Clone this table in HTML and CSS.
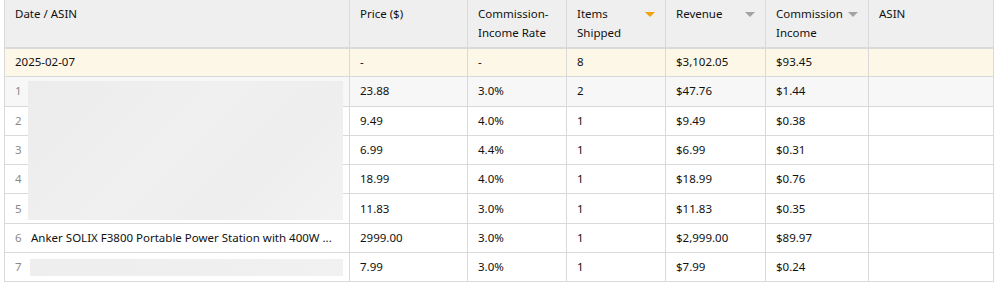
FILE: index.html
```html
<!DOCTYPE html>
<html>
<head>
<meta charset="utf-8">
<link rel="stylesheet" href="styles.css">
</head>
<body>
<table class="report">
  <colgroup>
    <col class="c-title"><col class="c-price"><col class="c-rate"><col class="c-items"><col class="c-rev"><col class="c-comm"><col class="c-asin">
  </colgroup>
  <thead>
    <tr>
      <th>Date / ASIN</th>
      <th>Price ($)</th>
      <th>Commission-<br>Income Rate</th>
      <th class="sortable"><span class="lbl">Items<br>Shipped</span><span class="arrow active"></span></th>
      <th class="sortable"><span class="lbl">Revenue</span><span class="arrow"></span></th>
      <th class="sortable"><span class="lbl">Commission<br>Income</span><span class="arrow"></span></th>
      <th>ASIN</th>
    </tr>
  </thead>
  <tbody>
    <tr class="date-row">
      <td>2025-02-07</td><td>-</td><td>-</td><td>8</td><td>$3,102.05</td><td>$93.45</td><td></td>
    </tr>
    <tr class="hover">
      <td class="title"><span class="num">1</span></td><td>23.88</td><td>3.0%</td><td>2</td><td>$47.76</td><td>$1.44</td><td></td>
    </tr>
    <tr>
      <td class="title"><span class="num">2</span></td><td>9.49</td><td>4.0%</td><td>1</td><td>$9.49</td><td>$0.38</td><td></td>
    </tr>
    <tr>
      <td class="title"><span class="num">3</span></td><td>6.99</td><td>4.4%</td><td>1</td><td>$6.99</td><td>$0.31</td><td></td>
    </tr>
    <tr>
      <td class="title"><span class="num">4</span></td><td>18.99</td><td>4.0%</td><td>1</td><td>$18.99</td><td>$0.76</td><td></td>
    </tr>
    <tr>
      <td class="title"><span class="num">5</span></td><td>11.83</td><td>3.0%</td><td>1</td><td>$11.83</td><td>$0.35</td><td></td>
    </tr>
    <tr>
      <td class="title"><span class="num">6</span><span class="name">Anker SOLIX F3800 Portable Power Station with 400W ...</span></td><td>2999.00</td><td>3.0%</td><td>1</td><td>$2,999.00</td><td>$89.97</td><td></td>
    </tr>
    <tr>
      <td class="title"><span class="num">7</span><span class="blur small"></span></td><td>7.99</td><td>3.0%</td><td>1</td><td>$7.99</td><td>$0.24</td><td></td>
    </tr>
  </tbody>
</table>
<div class="blur big"></div>
</body>
</html>
```

FILE: styles.css
```css
html, body {
  margin: 0;
  padding: 0;
  background: #ffffff;
}
body {
  padding: 0 0 0 4px;
  position: relative;
  font-family: "Noto Sans", "Open Sans", sans-serif;
  font-size: 11.5px;
  color: #111111;
}
.report {
  border-collapse: collapse;
  table-layout: fixed;
  width: 989px;
  margin-top: -1px;
}
.c-title { width: 345px; }
.c-price { width: 118px; }
.c-rate { width: 99px; }
.c-items { width: 99px; }
.c-rev { width: 100px; }
.c-comm { width: 103px; }
.c-asin { width: 125px; }

.report th, .report td {
  border: 1px solid #d9d9d9;
  text-align: left;
  padding: 0 10px;
  white-space: nowrap;
  overflow: hidden;
}
.report th {
  background: #efefef;
  font-weight: normal;
  vertical-align: top;
  height: 48px;
  padding-top: 4px;
  line-height: 19px;
  box-sizing: border-box;
  border-bottom: 2px solid #dadada;
}
.report th.sortable {
  position: relative;
}
.arrow {
  position: absolute;
  right: 10px;
  top: 12px;
  width: 0;
  height: 0;
  border-left: 5px solid transparent;
  border-right: 5px solid transparent;
  border-top: 5px solid #a3a3a3;
}
.arrow.active {
  border-top-color: #f0a30e;
}
.report td {
  height: 29.3px;
  line-height: 16px;
  box-sizing: border-box;
  padding-top: 0;
  padding-bottom: 0;
}
.date-row td {
  background: #fdf7e8;
}
.hover td {
  background: #f7f7f7;
}
.report td.title {
  padding-left: 10px;
  text-overflow: clip;
}
.num {
  color: #8a8a8a;
  display: inline-block;
  width: 16px;
}
.name {
  color: #111111;
}
.blur {
  display: inline-block;
  background: linear-gradient(90deg, #eeeeee, #efefef 50%, #f1f1f1);
}
.blur.small {
  width: 313px;
  height: 17px;
  vertical-align: middle;
  margin-left: -1px;
}
.blur.big {
  position: absolute;
  left: 28px;
  top: 81px;
  width: 315px;
  height: 139px;
  background: linear-gradient(135deg, #ececec, #f0f0f0 45%, #eeeeee 70%, #f2f2f2);
}
```
